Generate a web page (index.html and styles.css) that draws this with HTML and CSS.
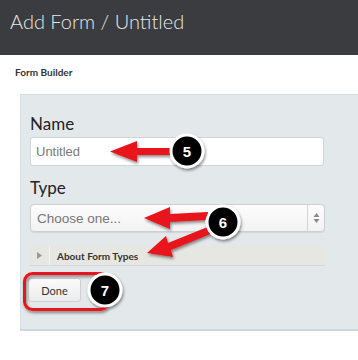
FILE: index.html
```html
<!DOCTYPE html>
<html lang="en">
  <head>
    <meta charset="UTF-8" />
    <title>Add Form</title>
    <link rel="stylesheet" href="styles.css">
  </head>
  <body>
    <header class="top-bar">
      <h1>Add Form / Untitled</h1>
    </header>
    <h2 class="section-title">Form Builder</h2>
    <div class="builder-panel">
      <label class="field-label" for="name">Name</label>
      <input id="name" class="text-input" type="text" placeholder="Untitled" />
      <label class="field-label type-label" for="type">Type</label>
      <div class="select-box">
        <span class="select-text">Choose one...</span>
        <span class="select-arrows">
          <svg width="7" height="12" viewBox="0 0 7 12">
            <path d="M3.5 1 L6.5 5 L0.5 5 Z" fill="#8a8a8a" />
            <path d="M3.5 11 L6.5 7 L0.5 7 Z" fill="#8a8a8a" />
          </svg>
        </span>
      </div>
      <div class="about-row">
        <span class="about-toggle">
          <svg width="5" height="7" viewBox="0 0 5 7"><path d="M0 0 L5 3.5 L0 7 Z" fill="#999" /></svg>
        </span>
        <span class="about-text">About Form Types</span>
      </div>
      <button class="done-btn">Done</button>
    </div>

    <!-- annotation overlay -->
    <svg class="annotations" width="358" height="360" viewBox="0 0 358 360">
      <defs>
        <filter id="shadow" x="-50%" y="-50%" width="200%" height="200%">
          <feDropShadow dx="1" dy="2" stdDeviation="1.5" flood-color="#000" flood-opacity="0.45" />
        </filter>
      </defs>
      <g filter="url(#shadow)">
        <rect x="24.5" y="273.5" width="84" height="36" rx="8" fill="none" stroke="#e8141b" stroke-width="3" />
        <path d="M110 151.5 L137 141 L137 148 L175 148 L175 155 L137 155 L137 162 Z" fill="#e8141b" />
        <path d="M144 218 L170 207 L170 214 L208 212 L208 220 L170 222 L170 229 Z" fill="#e8141b" />
        <path d="M147 253 L166 236 L168 243 L210 226 L213 233 L171 250 L173 257 Z" fill="#e8141b" />
        <circle cx="187" cy="151" r="16" fill="#000" stroke="#fff" stroke-width="3" />
        <circle cx="223" cy="222" r="16" fill="#000" stroke="#fff" stroke-width="3" />
        <circle cx="105" cy="290" r="16" fill="#000" stroke="#fff" stroke-width="3" />
      </g>
      <text class="step-num" x="187" y="156.5">5</text>
      <text class="step-num" x="223" y="227.5">6</text>
      <text class="step-num" x="105" y="295.5">7</text>
    </svg>
  </body>
</html>
```
FILE: styles.css
```css
body {
  font-family: 'Lato', 'Open Sans', sans-serif;
  margin: 0;
  padding: 0;
  background-color: #fff;
  color: #333;
  position: relative;
  width: 358px;
  height: 360px;
  overflow: hidden;
}

.top-bar {
  background-color: #3a3c40;
  height: 55px;
  padding-left: 10px;
}

.top-bar h1 {
  margin: 0;
  font-size: 20px;
  font-weight: 300;
  line-height: 42px;
  color: #e8e8e8;
}

.section-title {
  margin: 11px 0 0 15px;
  font-size: 10px;
  font-weight: 700;
  line-height: 12px;
  color: #333;
}

.builder-panel {
  margin: 16px 0 0 20px;
  width: 338px;
  box-sizing: border-box;
  padding: 19px 0 27px 9px;
  background-color: #e3e8eb;
  border: 1px solid #d7dee2;
  border-right: none;
  border-bottom: 2px solid #cdd6dc;
}

.field-label {
  display: block;
  font-size: 17px;
  line-height: 20px;
  color: #222;
}

.type-label {
  margin-top: 12px;
}

.text-input {
  display: block;
  margin-top: 3px;
  width: 294px;
  height: 29px;
  box-sizing: border-box;
  border: 1px solid #cfd5d8;
  border-radius: 3px;
  background: #fff;
  padding: 0 0 0 5px;
  font-family: 'Liberation Sans', sans-serif;
  font-size: 13px;
}

.text-input::placeholder {
  color: #7a7a7a;
}

.select-box {
  display: flex;
  align-items: center;
  margin-top: 6px;
  width: 295px;
  height: 28px;
  box-sizing: border-box;
  border: 1px solid #cfcfcf;
  border-radius: 4px;
  background: linear-gradient(#fdfdfd, #f2f2f2);
  box-shadow: 0 1px 1px rgba(0, 0, 0, 0.08);
}

.select-text {
  flex: 1;
  padding-left: 6px;
  font-family: 'Liberation Sans', sans-serif;
  font-size: 13.5px;
  color: #777;
}

.select-arrows {
  display: flex;
  align-items: center;
  justify-content: center;
  width: 16px;
  height: 100%;
  border-left: 1px solid #d4d4d4;
}

.about-row {
  display: flex;
  align-items: center;
  margin-top: 14px;
  width: 295px;
  height: 19px;
  background-color: #e6e6e2;
  border-bottom: 1px solid #d5d8d8;
}

.about-toggle {
  display: flex;
  align-items: center;
  justify-content: center;
  width: 19px;
  height: 100%;
  border-right: 1px solid #f4f4f2;
}

.about-text {
  padding-left: 7px;
  font-size: 10px;
  font-weight: 700;
  color: #333;
}

.done-btn {
  display: block;
  margin: 12px 0 0 -2px;
  width: 53px;
  height: 24px;
  border: 1px solid #d0d0d0;
  border-radius: 3px;
  background: linear-gradient(#fbfbfb, #ebebeb);
  font-family: 'Lato', 'Open Sans', sans-serif;
  font-size: 11px;
  color: #333;
  padding: 0;
}

/* annotations drawn over the page */
.annotations {
  position: absolute;
  left: 0;
  top: 0;
}

.step-num {
  fill: #fff;
  font-family: 'Liberation Sans', sans-serif;
  font-size: 15px;
  font-weight: 700;
  text-anchor: middle;
}
```
